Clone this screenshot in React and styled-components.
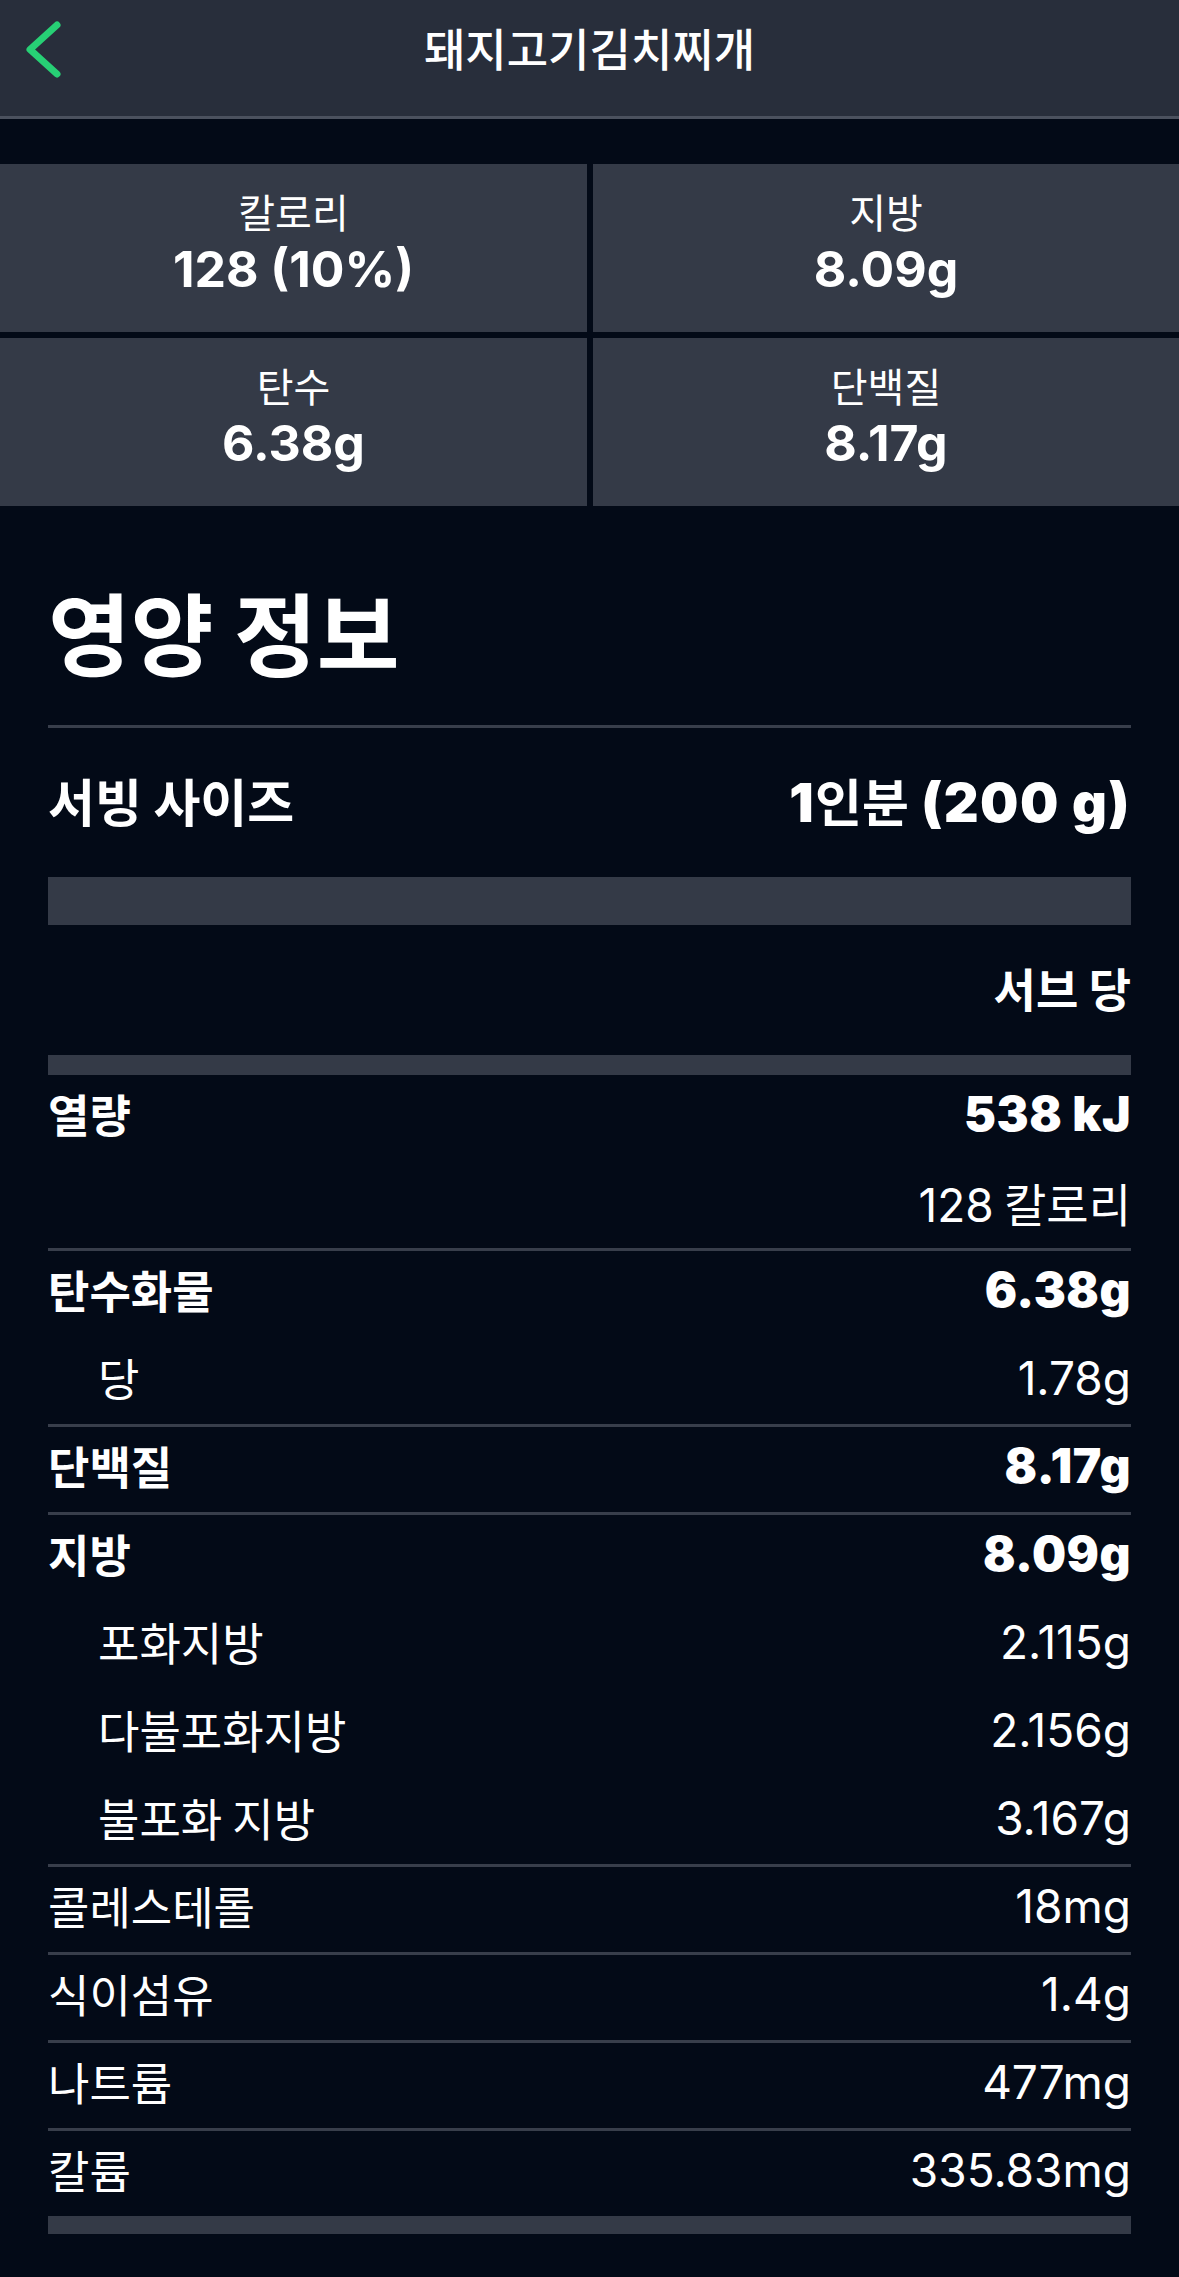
import React from 'react';
import styled, { createGlobalStyle } from 'styled-components';

const GlobalStyle = createGlobalStyle`
  html, body { margin: 0; padding: 0; background: #030a17; }
  body {
    font-family: Inter, "Noto Sans CJK KR", sans-serif;
    color: #ffffff;
    -webkit-font-smoothing: antialiased;
  }
`;

const KO = `"Noto Sans CJK KR", "Noto Sans", sans-serif`;
const NUM = `Inter, "Noto Sans CJK KR", sans-serif`;

const Page = styled.div`
  width: 1179px;
  min-height: 2277px;
  background: #030a17;
`;

const Header = styled.header`
  height: 100px;
  padding-bottom: 16px;
  background: #282e3b;
  border-bottom: 3px solid #4b515e;
  display: grid;
  grid-template-columns: 1fr auto 1fr;
  align-items: center;
`;

const BackButton = styled.button`
  justify-self: start;
  margin-left: 20px;
  padding: 0;
  border: 0;
  background: none;
  display: flex;
  align-items: center;
`;

const Title = styled.h1`
  margin: 0 0 6px;
  font-family: ${KO};
  font-size: 45px;
  font-weight: 500;
  line-height: 1;
  color: #ffffff;
`;

const Tiles = styled.section`
  margin-top: 45px;
  display: grid;
  grid-template-columns: 587px 1fr;
  grid-auto-rows: 168px;
  gap: 6px;
`;

const Tile = styled.div`
  box-sizing: border-box;
  padding-bottom: 10px;
  background: #343a47;
  display: flex;
  flex-direction: column;
  align-items: center;
  justify-content: center;
`;

const TileLabel = styled.div`
  font-family: ${KO};
  font-size: 40px;
  line-height: 42px;
  font-weight: 400;
`;

const TileValue = styled.div`
  font-family: ${NUM};
  font-size: 50px;
  line-height: 54px;
  font-weight: 700;
  margin-top: 10px;
`;

const Content = styled.main`
  padding: 0 48px;
`;

const Heading = styled.h2`
  margin: 79px 0 50px;
  font-family: ${KO};
  font-size: 90px;
  line-height: 90px;
  font-weight: 700;
`;

const Rule = styled.div`
  height: 3px;
  background: #383e4b;
`;

const ServingRow = styled.div`
  box-sizing: border-box;
  height: 149px;
  padding-bottom: 6px;
  display: flex;
  align-items: center;
  justify-content: space-between;
`;

const ServingLabel = styled.span`
  font-family: ${KO};
  font-size: 51px;
  font-weight: 700;
`;

const ServingValue = styled.span`
  font-family: ${NUM};
  font-size: 54px;
  font-weight: 900;
  letter-spacing: 1.5px;
`;

const KoPart = styled.span`
  font-family: ${KO};
  font-size: ${(p) => p.$size || 46}px;
  font-weight: ${(p) => p.$weight || 400};
  letter-spacing: 0;
`;

const Band = styled.div`
  height: ${(p) => p.$h}px;
  background: #343a47;
`;

const PerServeRow = styled.div`
  box-sizing: border-box;
  height: 130px;
  padding-bottom: 6px;
  display: flex;
  align-items: center;
  justify-content: flex-end;
  font-family: ${KO};
  font-size: 46px;
  font-weight: 700;
`;

const NutrientRow = styled.div`
  box-sizing: border-box;
  height: ${(p) => (p.$last ? 85 : 88)}px;
  padding-bottom: 8px;
  display: flex;
  align-items: center;
  justify-content: space-between;
  padding-left: ${(p) => (p.$indent ? 50 : 0)}px;
  border-bottom: ${(p) => (p.$last ? '0' : `3px solid ${p.$divider ? '#383e4b' : 'transparent'}`)};
`;

const Label = styled.span`
  font-family: ${KO};
  font-size: 45px;
  font-weight: ${(p) => (p.$bold ? 700 : 400)};
`;

const Value = styled.span`
  font-family: ${NUM};
  font-size: ${(p) => (p.$bold ? 48 : 46)}px;
  font-weight: ${(p) => (p.$bold ? 900 : 400)};
  letter-spacing: ${(p) => (p.$bold ? 0.5 : 0)}px;
`;

const Chevron = () => (
  <svg width="44" height="64" viewBox="0 0 44 64" fill="none">
    <polyline
      points="37,7 10,31.5 37,56"
      stroke="#27d075"
      strokeWidth="7"
      strokeLinecap="round"
      strokeLinejoin="round"
    />
  </svg>
);

const tiles = [
  { label: '칼로리', value: '128 (10%)' },
  { label: '지방', value: '8.09g' },
  { label: '탄수', value: '6.38g' },
  { label: '단백질', value: '8.17g' },
];

const rows = [
  { label: '열량', value: '538 kJ', bold: true },
  { label: '', value: '128', ko: ' 칼로리', divider: true },
  { label: '탄수화물', value: '6.38g', bold: true },
  { label: '당', value: '1.78g', indent: true, divider: true },
  { label: '단백질', value: '8.17g', bold: true, divider: true },
  { label: '지방', value: '8.09g', bold: true },
  { label: '포화지방', value: '2.115g', indent: true },
  { label: '다불포화지방', value: '2.156g', indent: true },
  { label: '불포화 지방', value: '3.167g', indent: true, divider: true },
  { label: '콜레스테롤', value: '18mg', divider: true },
  { label: '식이섬유', value: '1.4g', divider: true },
  { label: '나트륨', value: '477mg', divider: true },
  { label: '칼륨', value: '335.83mg', last: true },
];

export default function App() {
  return (
    <Page>
      <GlobalStyle />
      <Header>
        <BackButton aria-label="뒤로">
          <Chevron />
        </BackButton>
        <Title>돼지고기김치찌개</Title>
        <span />
      </Header>

      <Tiles>
        {tiles.map((t) => (
          <Tile key={t.label}>
            <TileLabel>{t.label}</TileLabel>
            <TileValue>{t.value}</TileValue>
          </Tile>
        ))}
      </Tiles>

      <Content>
        <Heading>영양 정보</Heading>
        <Rule />
        <ServingRow>
          <ServingLabel>서빙 사이즈</ServingLabel>
          <ServingValue>
            1<KoPart $size={51} $weight={700}>인분</KoPart> (200 g)
          </ServingValue>
        </ServingRow>
        <Band $h={48} />
        <PerServeRow>서브 당</PerServeRow>
        <Band $h={20} />
        {rows.map((r, i) => (
          <NutrientRow key={i} $indent={r.indent} $divider={r.divider} $last={r.last}>
            <Label $bold={r.bold}>{r.label}</Label>
            <Value $bold={r.bold}>
              {r.value}
              {r.ko && <KoPart>{r.ko}</KoPart>}
            </Value>
          </NutrientRow>
        ))}
        <Band $h={18} />
      </Content>
    </Page>
  );
}
